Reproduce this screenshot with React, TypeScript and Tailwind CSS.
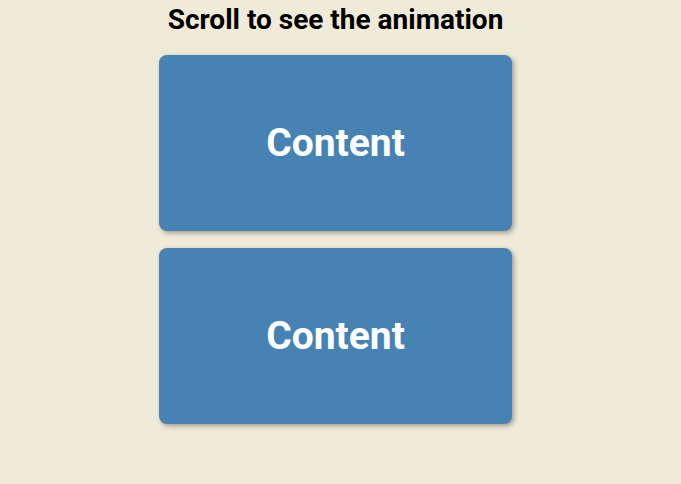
export default function App() {
  return (
    <div className="min-h-screen w-full bg-[#f0ebd8] pr-[10px] font-['Roboto',sans-serif]">
      <div className="flex flex-col items-center">
        <h2 className="mt-[1px] text-[28px] font-bold leading-[38px] text-black">Scroll to see the animation</h2>
        <div className="mt-[16px] flex flex-col gap-[17px]">
          {[0, 1].map((i) => (
            <div
              key={i}
              className="flex h-[176px] w-[353px] items-center justify-center rounded-[8px] bg-[#4682b4] shadow-[2px_2px_5px_rgba(0,0,0,0.35)]"
            >
              <span className="text-[39px] font-bold text-white">Content</span>
            </div>
          ))}
        </div>
      </div>
    </div>
  );
}
